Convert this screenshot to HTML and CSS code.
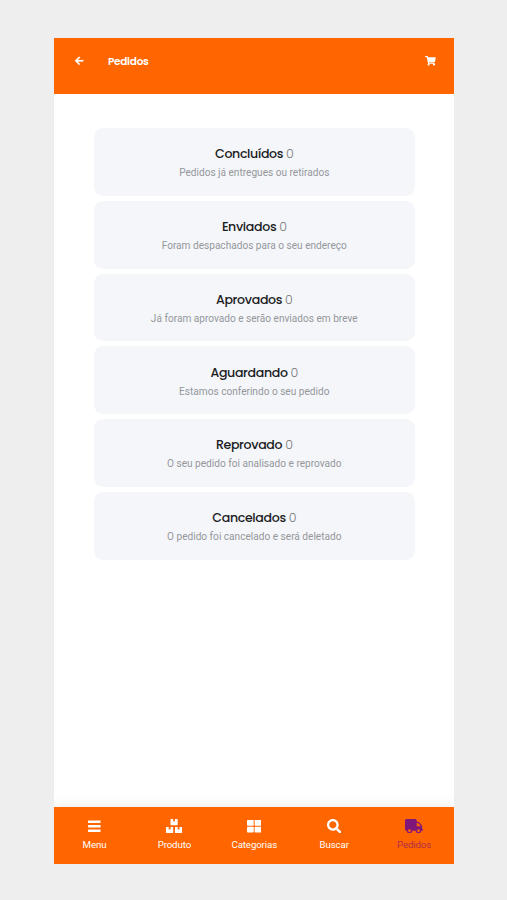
FILE: index.html
```
<!DOCTYPE html>
<html lang="pt-br">
  <head>
    <meta charset="UTF-8">
    <title>Pedidos</title>
    <link rel="stylesheet" href="styles.css">
  </head>
  <body>
    <div class="app">
      <header>
        <svg class="back" viewBox="0 0 448 512"><path d="M257.500 445.100l-22.200 22.200c-9.400 9.400-24.600 9.400-33.900 0L7 273c-9.400-9.400-9.400-24.600 0-33.900L201.400 44.700c9.400-9.400 24.600-9.400 33.900 0l22.200 22.200c9.500 9.500 9.300 25-.4 34.300L136.600 216H424c13.300 0 24 10.700 24 24v32c0 13.300-10.700 24-24 24H136.600l120.500 114.800c9.800 9.300 10 24.800.4 34.300z"/></svg>
        <h1>Pedidos</h1>
        <svg class="cart" viewBox="0 0 576 512"><path d="M528.12 301.319l47.273-208C578.806 78.301 567.391 64 551.99 64H159.208l-9.166-44.81C147.758 8.021 137.93 0 126.529 0H24C10.745 0 0 10.745 0 24v16c0 13.255 10.745 24 24 24h69.883l70.248 343.435C147.325 417.1 136 435.222 136 456c0 30.928 25.072 56 56 56s56-25.072 56-56c0-15.674-6.447-29.835-16.824-40h209.647C430.447 426.165 424 440.326 424 456c0 30.928 25.072 56 56 56s56-25.072 56-56c0-22.172-12.888-41.332-31.579-50.405l5.517-24.276c3.413-15.018-8.002-29.319-23.403-29.319H218.117l-6.545-32h293.145c11.206 0 20.92-7.754 23.403-18.681z"/></svg>
      </header>

      <main>
        <div class="card">
          <h2>Concluídos <span>0</span></h2>
          <p>Pedidos já entregues ou retirados</p>
        </div>
        <div class="card">
          <h2>Enviados <span>0</span></h2>
          <p>Foram despachados para o seu endereço</p>
        </div>
        <div class="card">
          <h2>Aprovados <span>0</span></h2>
          <p>Já foram aprovado e serão enviados em breve</p>
        </div>
        <div class="card">
          <h2>Aguardando <span>0</span></h2>
          <p>Estamos conferindo o seu pedido</p>
        </div>
        <div class="card">
          <h2>Reprovado <span>0</span></h2>
          <p>O seu pedido foi analisado e reprovado</p>
        </div>
        <div class="card">
          <h2>Cancelados <span>0</span></h2>
          <p>O pedido foi cancelado e será deletado</p>
        </div>
      </main>

      <nav>
        <a>
          <svg viewBox="0 0 448 512"><rect y="50" width="448" height="88" rx="16"/><rect y="212" width="448" height="88" rx="16"/><rect y="374" width="448" height="88" rx="16"/></svg>
          <span>Menu</span>
        </a>
        <a>
          <svg viewBox="0 0 576 512"><path d="M560 288h-80v96l-32-21.300-32 21.300v-96h-80c-8.800 0-16 7.200-16 16v192c0 8.800 7.200 16 16 16h224c8.800 0 16-7.200 16-16V304c0-8.800-7.200-16-16-16zm-384-64h224c8.800 0 16-7.200 16-16V16c0-8.800-7.200-16-16-16h-80v96l-32-21.300L256 96V0h-80c-8.800 0-16 7.200-16 16v192c0 8.800 7.200 16 16 16zm64 64h-80v96l-32-21.300L96 384v-96H16c-8.800 0-16 7.200-16 16v192c0 8.800 7.200 16 16 16h224c8.800 0 16-7.200 16-16V304c0-8.800-7.200-16-16-16z"/></svg>
          <span>Produto</span>
        </a>
        <a>
          <svg viewBox="0 0 512 512"><rect y="32" width="240" height="208" rx="24"/><rect x="272" y="32" width="240" height="208" rx="24"/><rect y="272" width="240" height="208" rx="24"/><rect x="272" y="272" width="240" height="208" rx="24"/></svg>
          <span>Categorias</span>
        </a>
        <a>
          <svg viewBox="0 0 512 512"><path d="M505 442.700L405.300 343c-4.500-4.500-10.600-7-17-7H372c27.600-35.300 44-79.700 44-128C416 93.100 322.900 0 208 0S0 93.100 0 208s93.100 208 208 208c48.300 0 92.700-16.400 128-44v16.300c0 6.400 2.500 12.500 7 17l99.700 99.700c9.400 9.400 24.600 9.400 33.900 0l28.300-28.300c9.400-9.400 9.400-24.600.1-34zM208 336c-70.700 0-128-57.200-128-128 0-70.700 57.200-128 128-128 70.700 0 128 57.200 128 128 0 70.700-57.200 128-128 128z"/></svg>
          <span>Buscar</span>
        </a>
        <a class="active">
          <svg viewBox="0 0 640 512"><path d="M624 352h-16V243.900c0-12.700-5.100-24.900-14.100-33.900L494 110.100c-9-9-21.200-14.100-33.900-14.100H416V48c0-26.500-21.500-48-48-48H48C21.500 0 0 21.500 0 48v320c0 26.500 21.500 48 48 48h16c0 53 43 96 96 96s96-43 96-96h128c0 53 43 96 96 96s96-43 96-96h48c8.800 0 16-7.200 16-16v-32c0-8.800-7.200-16-16-16zM160 464c-26.500 0-48-21.500-48-48s21.500-48 48-48 48 21.500 48 48-21.500 48-48 48zm320 0c-26.500 0-48-21.500-48-48s21.500-48 48-48 48 21.500 48 48-21.500 48-48 48zm80-208H416V144h44.100l99.900 99.900V256z"/></svg>
          <span>Pedidos</span>
        </a>
      </nav>
    </div>
  </body>
</html>
```
FILE: styles.css
```
* {
  box-sizing: border-box;
}

body {
  background-color: #eeeeee;
  font-family: Roboto, sans-serif;
  margin: 0;
  padding: 38px 0 0 54px;
}

svg {
  fill: currentColor;
  display: block;
}

.app {
  display: flex;
  flex-direction: column;
  width: 399.5px;
  height: 825.5px;
  background-color: white;
  overflow: hidden;
}

header {
  display: flex;
  align-items: center;
  height: 56px;
  padding: 0 17.5px 9.5px 21px;
  background-color: #ff6600;
  color: white;
}

.back {
  height: 9.6px;
  stroke: white;
  stroke-width: 14px;
  overflow: visible;
}

header h1 {
  font-family: Poppins, Inter, sans-serif;
  font-size: 10.5px;
  font-weight: 600;
  letter-spacing: -0.25px;
  padding-top: 1px;
  margin: 0 auto 0 24.5px;
}

.cart {
  height: 9.6px;
}

main {
  display: flex;
  flex-direction: column;
  gap: 5px;
  flex: 1;
  padding: 34px 38.5px 0 39.5px;
}

.card {
  height: 67.8px;
  padding-top: 16.2px;
  border-radius: 9px;
  background-color: #f4f6fa;
  text-align: center;
}

.card h2 {
  color: #1c1c1e;
  font-family: Poppins, Inter, sans-serif;
  font-size: 12.6px;
  font-weight: 500;
  letter-spacing: -0.35px;
  line-height: 20px;
  margin: 0;
}

.card h2 span {
  color: #777;
  font-weight: 300;
}

.card p {
  color: #95979b;
  font-size: 10.1px;
  line-height: 14px;
  margin: 2px 0 0;
}

nav {
  display: flex;
  height: 57px;
  background-color: #ff6600;
  box-shadow: 0 -2px 10px rgba(0, 0, 0, 0.08);
}

nav a {
  display: flex;
  flex-direction: column;
  align-items: center;
  flex: 1;
  padding: 12px 0 0 1px;
  color: white;
}

nav svg {
  height: 14.4px;
}

nav span {
  font-size: 9.7px;
  letter-spacing: -0.12px;
  line-height: 12px;
  margin-top: 6px;
}

nav .active {
  color: #80157a;
}

nav .active span {
  color: #b02d48;
}
```
